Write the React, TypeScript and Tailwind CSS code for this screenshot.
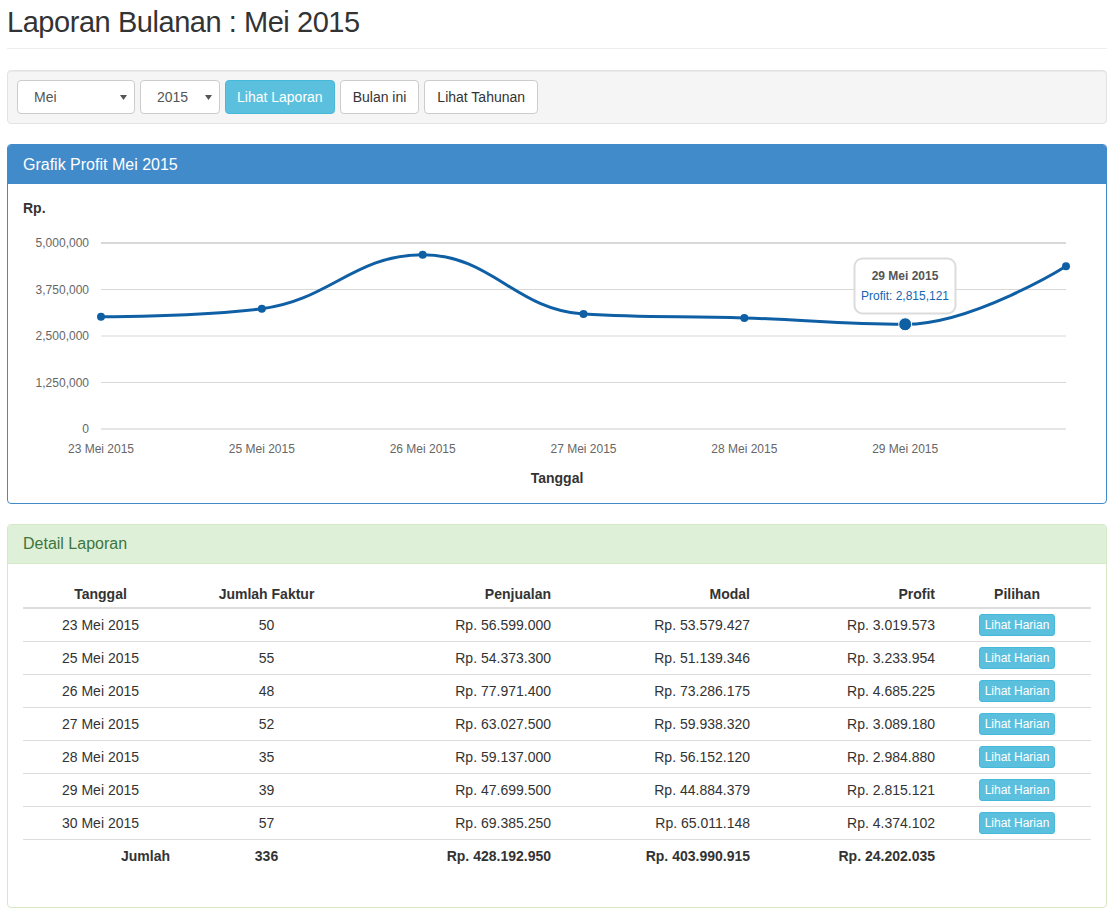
import React from "react";

const rows = [
  { tgl: "23 Mei 2015", faktur: 50, jual: "Rp. 56.599.000", modal: "Rp. 53.579.427", profit: "Rp. 3.019.573" },
  { tgl: "25 Mei 2015", faktur: 55, jual: "Rp. 54.373.300", modal: "Rp. 51.139.346", profit: "Rp. 3.233.954" },
  { tgl: "26 Mei 2015", faktur: 48, jual: "Rp. 77.971.400", modal: "Rp. 73.286.175", profit: "Rp. 4.685.225" },
  { tgl: "27 Mei 2015", faktur: 52, jual: "Rp. 63.027.500", modal: "Rp. 59.938.320", profit: "Rp. 3.089.180" },
  { tgl: "28 Mei 2015", faktur: 35, jual: "Rp. 59.137.000", modal: "Rp. 56.152.120", profit: "Rp. 2.984.880" },
  { tgl: "29 Mei 2015", faktur: 39, jual: "Rp. 47.699.500", modal: "Rp. 44.884.379", profit: "Rp. 2.815.121" },
  { tgl: "30 Mei 2015", faktur: 57, jual: "Rp. 69.385.250", modal: "Rp. 65.011.148", profit: "Rp. 4.374.102" },
];

const profits = [3019573, 3233954, 4685225, 3089180, 2984880, 2815121, 4374102];
const xLabels = ["23 Mei 2015", "25 Mei 2015", "26 Mei 2015", "27 Mei 2015", "28 Mei 2015", "29 Mei 2015"];

// chart geometry in page coordinates
const X0 = 101;
const X1 = 1066;
const Y0 = 429;
const PLOT_H = 186;

function splinePath(pts: { x: number; y: number }[]) {
  const sm = 1.5;
  const den = sm + 1;
  const ctrl = pts.map((p, i) => {
    if (i === 0 || i === pts.length - 1) return null;
    const l = pts[i - 1];
    const n = pts[i + 1];
    let lx = (sm * p.x + l.x) / den;
    let ly = (sm * p.y + l.y) / den;
    let rx = (sm * p.x + n.x) / den;
    let ry = (sm * p.y + n.y) / den;
    const dl = Math.hypot(lx - p.x, ly - p.y);
    const dr = Math.hypot(rx - p.x, ry - p.y);
    const la = Math.atan2(ly - p.y, lx - p.x);
    const ra = Math.atan2(ry - p.y, rx - p.x);
    let ja = Math.PI / 2 + (la + ra) / 2;
    if (Math.abs(la - ja) > Math.PI / 2) ja -= Math.PI;
    lx = p.x + Math.cos(ja) * dl;
    ly = p.y + Math.sin(ja) * dl;
    rx = p.x + Math.cos(Math.PI + ja) * dr;
    ry = p.y + Math.sin(Math.PI + ja) * dr;
    if (ly > Math.max(l.y, p.y)) {
      ly = Math.max(l.y, p.y);
      ry = 2 * p.y - ly;
    } else if (ly < Math.min(l.y, p.y)) {
      ly = Math.min(l.y, p.y);
      ry = 2 * p.y - ly;
    }
    if (ry > Math.max(n.y, p.y)) {
      ry = Math.max(n.y, p.y);
      ly = 2 * p.y - ry;
    } else if (ry < Math.min(n.y, p.y)) {
      ry = Math.min(n.y, p.y);
      ly = 2 * p.y - ry;
    }
    return { lx, ly, rx, ry };
  });
  let d = `M ${pts[0].x} ${pts[0].y}`;
  for (let i = 1; i < pts.length; i++) {
    const prev = ctrl[i - 1];
    const cur = ctrl[i];
    const c1x = prev ? prev.rx : pts[i - 1].x;
    const c1y = prev ? prev.ry : pts[i - 1].y;
    const c2x = cur ? cur.lx : pts[i].x;
    const c2y = cur ? cur.ly : pts[i].y;
    d += ` C ${c1x} ${c1y} ${c2x} ${c2y} ${pts[i].x} ${pts[i].y}`;
  }
  return d;
}

function ProfitChart() {
  const step = (X1 - X0) / (profits.length - 1);
  const pts = profits.map((v, i) => ({ x: X0 + i * step, y: Y0 - (v / 5000000) * PLOT_H }));
  const grid = [
    { v: "5,000,000", y: 243 },
    { v: "3,750,000", y: 289.5 },
    { v: "2,500,000", y: 336 },
    { v: "1,250,000", y: 382.5 },
    { v: "0", y: 429 },
  ];
  const lineColor = "#0f5fa5";
  const hover = pts[5];

  return (
    <svg width="1098" height="319" viewBox="8 184 1098 319" className="block">
      <text x="23" y="213" fontSize="14" fontWeight="bold" fill="#333">
        Rp.
      </text>
      {grid.map((g) => (
        <g key={g.v}>
          <line x1={X0} x2={X1} y1={g.y} y2={g.y} stroke={g.v === "0" ? "#e6e6e6" : "#d8d8d8"} strokeWidth={g.v === "0" || g.v === "5,000,000" ? 2 : 1} />
          <text x="89" y={g.y + 4} fontSize="12" fill="#666" textAnchor="end">
            {g.v}
          </text>
        </g>
      ))}
      {xLabels.map((l, i) => (
        <text key={l} x={X0 + i * step} y="453" fontSize="12" fill="#666" textAnchor="middle">
          {l}
        </text>
      ))}
      <text x="557" y="483" fontSize="14" fontWeight="bold" fill="#333" textAnchor="middle">
        Tanggal
      </text>
      <path d={splinePath(pts)} fill="none" stroke={lineColor} strokeWidth="3" strokeLinejoin="round" strokeLinecap="round" />
      {pts.map((p, i) => (
        <circle key={i} cx={p.x} cy={p.y} r="4" fill={lineColor} />
      ))}
      <circle cx={hover.x} cy={hover.y} r="6.5" fill={lineColor} stroke="#fff" strokeWidth="1" />
      <rect x="854.5" y="258.5" width="101" height="55" rx="8" fill="#fff" fillOpacity="0.92" stroke="#dcdcdc" strokeWidth="2" />
      <text x="905" y="280" fontSize="12" fontWeight="bold" fill="#555" textAnchor="middle">
        29 Mei 2015
      </text>
      <text x="905" y="300" fontSize="12" fill="#1565b0" textAnchor="middle">
        Profit: 2,815,121
      </text>
    </svg>
  );
}

function SelectBox({ value, width }: { value: string; width: string }) {
  return (
    <div className={`relative h-[34px] ${width} rounded-[4px] border border-[#ccc] bg-white`}>
      <div className="flex h-full items-center pl-[16px] text-[14px] text-[#555]">{value}</div>
      <svg className="absolute right-[7px] top-[14px]" width="7" height="5" viewBox="0 0 7 5">
        <path d="M0 0 L7 0 L3.5 5 Z" fill="#555" />
      </svg>
    </div>
  );
}

export default function App() {
  return (
    <div className="min-h-screen bg-white px-[7px] font-['Liberation_Sans',Arial,sans-serif] text-[14px] text-[#333]">
      {/* JUDUL */}
      <h1 className="mt-[6px] border-b border-[#eee] pb-[9px] text-[29px] leading-[33px] font-normal tracking-[-0.45px]">
        Laporan Bulanan : Mei 2015
      </h1>

      {/* FILTER */}
      <div className="mt-[21px] flex items-center gap-[5px] rounded-[4px] border border-[#e3e3e3] bg-[#f5f5f5] p-[9px] shadow-[inset_0_1px_1px_rgba(0,0,0,0.05)]">
        <SelectBox value="Mei" width="w-[118px]" />
        <SelectBox value="2015" width="w-[80px]" />
        <button className="h-[34px] rounded-[4px] border border-[#46b8da] bg-[#5bc0de] px-[11px] text-[14px] text-white">
          Lihat Laporan
        </button>
        <button className="h-[34px] rounded-[4px] border border-[#ccc] bg-white px-[12px] text-[14px] text-[#333]">
          Bulan ini
        </button>
        <button className="h-[34px] rounded-[4px] border border-[#ccc] bg-white px-[12px] text-[14px] text-[#333]">
          Lihat Tahunan
        </button>
      </div>

      {/* GRAFIK */}
      <div className="mt-[20px] overflow-hidden rounded-[4px] border border-[#428bca] bg-white">
        <div className="flex h-[39px] items-center bg-[#428bca] px-[15px] text-[16px] text-white">
          Grafik Profit Mei 2015
        </div>
        <ProfitChart />
      </div>

      {/* DETAIL */}
      <div className="mt-[20px] overflow-hidden rounded-[4px] border border-[#d6e9c6] bg-white">
        <div className="flex h-[39px] items-center border-b border-[#d6e9c6] bg-[#dff0d8] px-[15px] text-[16px] text-[#3c763d]">
          Detail Laporan
        </div>
        <div className="p-[15px] pb-[36px]">
          <table className="w-full border-collapse text-[14px] leading-[20px]">
            <colgroup>
              <col className="w-[155px]" />
              <col className="w-[177px]" />
              <col className="w-[204px]" />
              <col className="w-[199px]" />
              <col className="w-[185px]" />
              <col />
            </colgroup>
            <thead>
              <tr className="border-b-2 border-[#ddd]">
                <th className="px-[8px] pt-[5px] pb-[3px] text-center font-bold">Tanggal</th>
                <th className="px-[8px] pt-[5px] pb-[3px] text-center font-bold">Jumlah Faktur</th>
                <th className="px-[8px] pt-[5px] pb-[3px] text-right font-bold">Penjualan</th>
                <th className="px-[8px] pt-[5px] pb-[3px] text-right font-bold">Modal</th>
                <th className="px-[8px] pt-[5px] pb-[3px] text-right font-bold">Profit</th>
                <th className="px-[8px] pt-[5px] pb-[3px] text-center font-bold">Pilihan</th>
              </tr>
            </thead>
            <tbody>
              {rows.map((r) => (
                <tr key={r.tgl} className="border-b border-[#ddd]">
                  <td className="px-[8px] py-[5px] text-center">{r.tgl}</td>
                  <td className="px-[8px] py-[5px] text-center">{r.faktur}</td>
                  <td className="px-[8px] py-[5px] text-right">{r.jual}</td>
                  <td className="px-[8px] py-[5px] text-right">{r.modal}</td>
                  <td className="px-[8px] py-[5px] text-right">{r.profit}</td>
                  <td className="px-[8px] py-[5px] text-center">
                    <button className="h-[22px] rounded-[3px] border border-[#46b8da] bg-[#5bc0de] px-[5px] text-[12px] leading-[18px] text-white">
                      Lihat Harian
                    </button>
                  </td>
                </tr>
              ))}
              <tr>
                <td className="px-[8px] pt-[6px] pb-[5px] text-right font-bold">Jumlah</td>
                <td className="px-[8px] pt-[6px] pb-[5px] text-center font-bold">336</td>
                <td className="px-[8px] pt-[6px] pb-[5px] text-right font-bold">Rp. 428.192.950</td>
                <td className="px-[8px] pt-[6px] pb-[5px] text-right font-bold">Rp. 403.990.915</td>
                <td className="px-[8px] pt-[6px] pb-[5px] text-right font-bold">Rp. 24.202.035</td>
                <td className="px-[8px] pt-[6px] pb-[5px]"></td>
              </tr>
            </tbody>
          </table>
        </div>
      </div>
    </div>
  );
}
